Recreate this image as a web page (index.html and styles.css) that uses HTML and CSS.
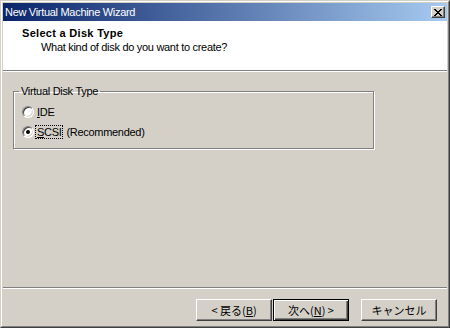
FILE: index.html
```html
<!DOCTYPE html>
<html lang="en">
  <head>
    <meta charset="UTF-8" />
    <title>New Virtual Machine Wizard</title>
    <link rel="stylesheet" href="styles.css">
  </head>
  <body>
    <div class="window">
      <div class="frame">
        <div class="titlebar">
          <span class="title">New Virtual Machine Wizard</span>
          <span class="close">
            <svg width="8" height="7" viewBox="0 0 8 7">
              <path d="M0 0h2v1h1v1h2v-1h1v-1h2v1h-1v1h-1v1h-1v1h1v1h1v1h1v1h-2v-1h-1v-1h-2v1h-1v1h-2v-1h1v-1h1v-1h1v-1h-1v-1h-1v-1h-1z" fill="#000"/>
            </svg>
          </span>
        </div>

        <div class="header">
          <div class="heading">Select a Disk Type</div>
          <div class="subheading">What kind of disk do you want to create?</div>
        </div>
        <div class="sep"></div>

        <div class="content">
          <fieldset class="group">
            <legend>Virtual Disk Type</legend>
            <div class="option">
              <span class="radio"></span>
              <span class="label"><u>I</u>DE</span>
            </div>
            <div class="option">
              <span class="radio checked"></span>
              <span class="label focus"><u>S</u>CSI</span>
              <span class="note">(Recommended)</span>
            </div>
          </fieldset>
        </div>

        <div class="sep"></div>
        <div class="buttons">
          <button class="btn">&lt; 戻る(<u>B</u>)</button>
          <button class="btn default">次へ(<u>N</u>) &gt;</button>
          <button class="btn cancel">キャンセル</button>
        </div>
      </div>
    </div>
  </body>
</html>
```

FILE: styles.css
```css
body {
  margin: 0;
  background-color: #d4d0c8;
  font-family: "Liberation Sans", "Noto Sans CJK JP", sans-serif;
  font-size: 11px;
  letter-spacing: -0.3px; /* narrow it down to Tahoma widths */
  color: #000;
}

.window {
  width: 450px;
  height: 328px;
  box-sizing: border-box;
  border: 1px solid;
  border-color: #d4d0c8 #404040 #404040 #d4d0c8;
  background-color: #d4d0c8;
}

.frame {
  height: 100%;
  box-sizing: border-box;
  border: 1px solid;
  border-color: #fff #808080 #808080 #fff;
  padding: 1px;
  display: flex;
  flex-direction: column;
}

/* caption */
.titlebar {
  height: 18px;
  flex-shrink: 0;
  display: flex;
  align-items: center;
  justify-content: space-between;
  padding: 0 2px;
  background: linear-gradient(to right, #0a246a, #a6caf0);
  color: #fff;
}

.title {
  line-height: 18px;
}

.close {
  width: 14px;
  height: 12px;
  box-sizing: border-box;
  border: 1px solid;
  border-color: #fff #404040 #404040 #fff;
  box-shadow: inset -1px -1px 0 #808080;
  background-color: #d4d0c8;
  display: flex;
  align-items: center;
  justify-content: center;
}

.close svg {
  display: block;
  margin-left: -1px;
}

/* white header band */
.header {
  height: 49px;
  flex-shrink: 0;
  background-color: #fff;
  padding: 5px 0 0 19px;
  box-sizing: border-box;
}

.heading {
  font-weight: bold;
  line-height: 15px;
  letter-spacing: 0.3px;
}

.subheading {
  padding-left: 19px;
  line-height: 13px;
}

.sep {
  flex-shrink: 0;
  height: 0;
  border-top: 1px solid #808080;
  border-bottom: 1px solid #fff;
}

.content {
  flex: 1;
}

/* group box */
.group {
  margin: 13px 0 0 10px;
  width: 361px;
  height: 64px;
  box-sizing: border-box;
  padding: 4px 0 0 8px;
  border: 1px solid #808080;
  box-shadow: 1px 1px 0 #fff, inset 1px 1px 0 #fff;
  min-inline-size: 0;
}

.group legend {
  padding: 0 2px;
  margin-left: -3px;
  line-height: 13px;
}

.option {
  height: 20px;
  display: flex;
  align-items: center;
}

.radio {
  width: 12px;
  height: 12px;
  box-sizing: border-box;
  border-radius: 50%;
  border: 1px solid;
  border-color: #808080 #fff #fff #808080;
  box-shadow: inset 1px 1px 0 #404040, inset -1px -1px 0 #d4d0c8;
  background-color: #fff;
  display: flex;
  align-items: center;
  justify-content: center;
  flex-shrink: 0;
}

.radio.checked::after {
  content: "";
  width: 4px;
  height: 4px;
  border-radius: 50%;
  background-color: #000;
}

.label {
  margin-left: 1px;
  border: 1px solid transparent;
  line-height: 12px;
  padding: 0 1px 0 1px;
}

.label.focus {
  border: 1px dotted #000;
}

.note {
  margin-left: 3px;
}

/* bottom buttons */
.buttons {
  height: 36px;
  flex-shrink: 0;
  box-sizing: border-box;
  display: flex;
  justify-content: flex-end;
  align-items: flex-start;
  padding: 10px 10px 0 0;
}

.btn {
  width: 76px;
  height: 22px;
  margin: 0;
  padding: 0;
  font-family: "Noto Sans CJK JP", sans-serif;
  font-size: 11px;
  letter-spacing: 0;
  color: #000;
  background-color: #d4d0c8;
  border: 1px solid;
  border-color: #fff #404040 #404040 #fff;
  box-shadow: inset -1px -1px 0 #808080;
}

.btn.default {
  margin-left: 1px;
  border-color: #000;
  box-shadow: inset 1px 1px 0 #fff, inset -1px -1px 0 #404040, inset -2px -2px 0 #808080;
}

.btn.cancel {
  margin-left: 12px;
}
```
